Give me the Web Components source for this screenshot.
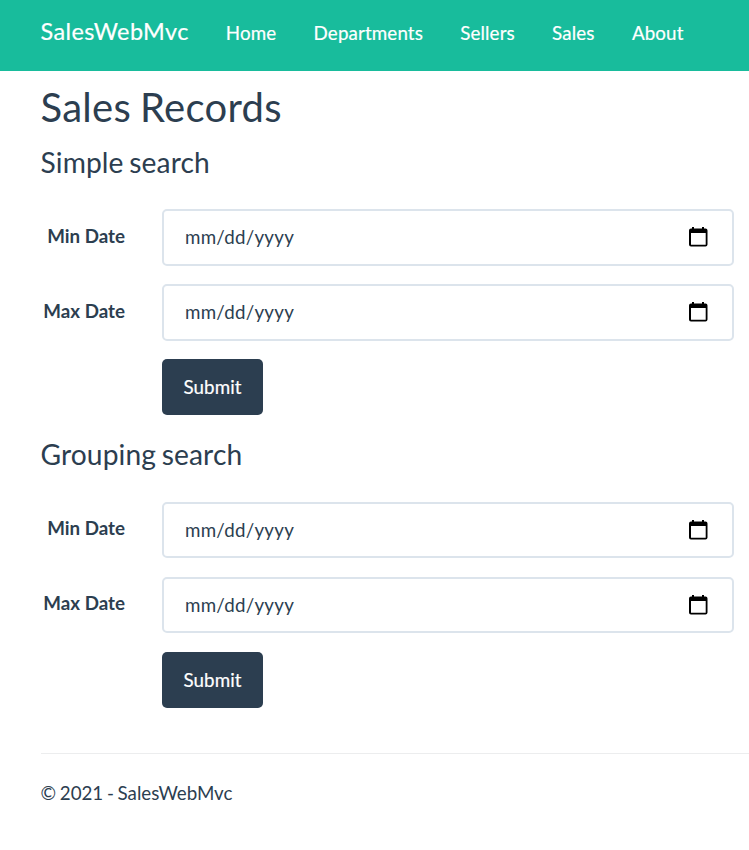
<!DOCTYPE html>
<html lang="en">
<head>
<meta charset="utf-8">
<title>Sales Records - SalesWebMvc</title>
<style>
html,body{margin:0;padding:0;background:#fff;overflow:hidden}
body{font-family:Lato,"Liberation Sans",sans-serif;color:#2c3e50;font-size:18.75px;height:850px}
</style>
</head>
<body>
<sales-page></sales-page>
<script>
const define = (name, html) => customElements.define(name, class extends HTMLElement {
  connectedCallback() {
    if (this.shadowRoot) return;
    const t = document.createElement('template');
    t.innerHTML = html;
    this.attachShadow({mode: 'open'}).append(t.content.cloneNode(true));
  }
});
define('nav-bar', `<style>
:host{display:flex;height:71px;box-sizing:border-box;background:#18bc9c;color:#fff;padding:0 40.5px 5px;align-items:center;white-space:nowrap}
.brand{font-size:23.44px;line-height:28px;letter-spacing:.42px;margin-right:37px;margin-bottom:4px;-webkit-text-stroke:.2px #fff}
nav{display:flex;gap:37.3px}
</style><div class="brand">SalesWebMvc</div><nav><slot></slot></nav>`);
define('nav-link', `<style>:host{display:block;line-height:24px;letter-spacing:.13px;-webkit-text-stroke:.2px #fff}</style><slot></slot>`);
define('page-title', `<style>:host{display:block;font-size:40px;line-height:48px;height:48px;letter-spacing:.28px;word-spacing:-1.6px}</style><slot></slot>`);
define('section-title', `<style>:host{display:block;font-size:28.2px;line-height:34px;height:34px;letter-spacing:.1px;word-spacing:-1.600px}</style><slot></slot>`);
define('date-field', `<style>
:host{display:grid;grid-template-columns:84.500px 572px;column-gap:37px;align-items:center;height:var(--field-height,57px)}
.label{font-weight:700;text-align:right;line-height:24px;margin-top:var(--label-lift,-3px);white-space:nowrap}
.box{box-sizing:border-box;height:var(--field-height,57px);border:2px solid #dce4ec;border-radius:5px;display:flex;align-items:center;justify-content:space-between;padding:0 24px 1px 21px}
.box span{letter-spacing:.25px;line-height:24px;margin-bottom:var(--text-lift,1px)}
svg{display:block}
</style><div class="label"><slot></slot></div><div class="box"><span>mm/dd/yyyy</span><svg width="20" height="20" viewBox="0 0 20 20"><path fill="#000" fill-rule="evenodd" d="M4 0h2v1.500h8V0h2v1.500h1.500q2 0 2 2V17.500q0 2-2 2H3q-2 0-2-2V3.500q0-2 2-2h1zM3 6v11.700h14.700V6z"/></svg></div>`);
define('submit-button', `<style>
:host{display:flex;box-sizing:border-box;width:101px;height:56px;margin-left:121.500px;padding-bottom:2px;align-items:center;justify-content:center;background:#2c3e50;color:#fff;border-radius:5px;letter-spacing:.08px;-webkit-text-stroke:.2px #fff}
</style><slot></slot>`);
define('search-form', `<style>:host{display:flex;flex-direction:column;gap:var(--field-gap,18px)}</style>
<date-field>Min Date</date-field><date-field>Max Date</date-field><submit-button>Submit</submit-button>`);
define('page-footer', `<style>:host{display:block;border-top:1px solid #ecedee;padding-top:27px;line-height:24px;letter-spacing:-.01px;word-spacing:-1.100px}</style><slot></slot>`);
define('sales-page', `<style>
:host{display:block}
main{padding:12px 0 0 40.5px}
section-title{margin-top:14px}
search-form{margin-top:30px}
.second{margin-top:22px}
.second + search-form{margin-top:31px;--field-height:56px;--field-gap:19px;--label-lift:-4px;--text-lift:0px}
page-footer{margin-top:45px}
</style>
<nav-bar><nav-link>Home</nav-link><nav-link>Departments</nav-link><nav-link>Sellers</nav-link><nav-link>Sales</nav-link><nav-link>About</nav-link></nav-bar>
<main><page-title>Sales Records</page-title>
<section-title>Simple search</section-title><search-form></search-form>
<section-title class="second">Grouping search</section-title><search-form></search-form>
<page-footer>© 2021 - SalesWebMvc</page-footer></main>`);
</script>
</body>
</html>
